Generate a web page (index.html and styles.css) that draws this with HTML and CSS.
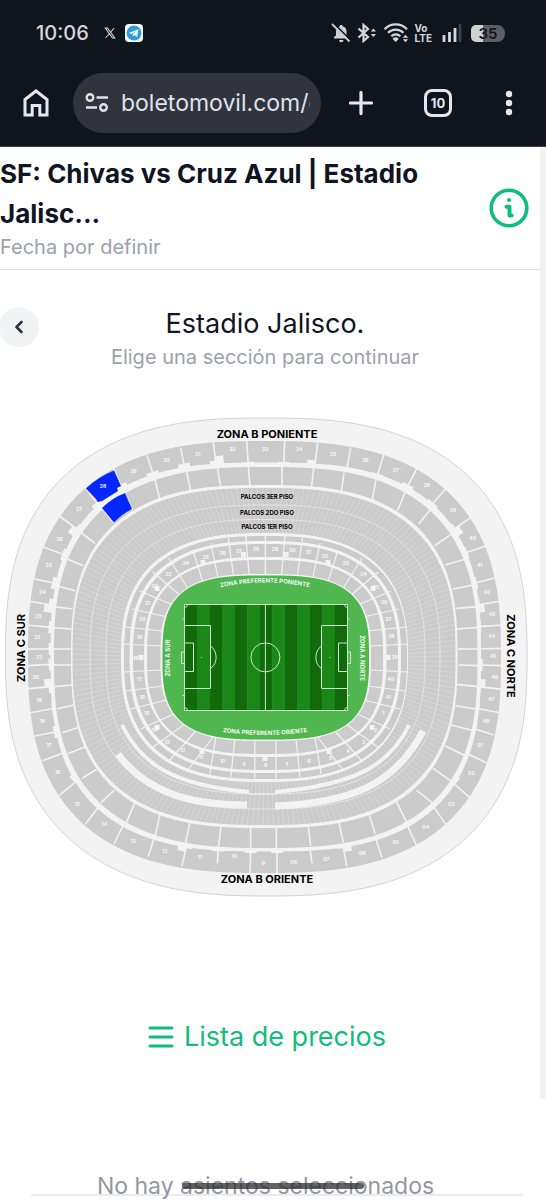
FILE: index.html
```html
<!DOCTYPE html>
<html lang="es">
<head>
<meta charset="utf-8">
<meta name="viewport" content="width=device-width, initial-scale=1">
<title>Boletomovil</title>
<link rel="stylesheet" href="styles.css">
</head>
<body>
<header class="browser">
  <div class="status">
    <div class="status-left">
      <span class="clock">10:06</span>
      <svg class="ic-x" viewBox="0 0 12 12" width="12" height="12"><path d="M1.3 1h2.2l7.2 10H8.500z M10.200 1 6.800 5 M5.200 7 1.500 11" fill="none" stroke="#d6d7da" stroke-width="1.100"/></svg>
      <svg viewBox="0 0 18 18" width="18" height="18"><rect width="18" height="18" rx="4" fill="#fff"/><circle cx="9" cy="9" r="7.500" fill="#2c9fdb"/><path d="M3.800 9 13.500 5.200 12 13 9.300 11.100 8 12.400 7.700 10.200 11.400 6.900 6.600 9.900z" fill="#fff"/></svg>
    </div>
    <div class="status-right">
      <svg viewBox="0 0 20 20" width="20" height="20"><path d="M3 15.500h14v-1.600l-1.500-1.500V8.500c0-2.700-1.500-4.700-4-5.200V2h-2.500v1.300C6.500 3.800 5 5.800 5 8.500v3.900l-2 1.500zM8 17h4.500a2.200 2.200 0 0 1-4.500 0z" fill="#cfd0d2"/><path d="M2.300 0 20 17.700" stroke="#0e151d" stroke-width="1.800"/><path d="M1 1 18.500 18.500" stroke="#cfd0d2" stroke-width="1.800"/></svg>
      <svg viewBox="0 0 20 20" width="20" height="20"><path d="M1.500 5.500 11 14 6.500 18V2L11 6 1.500 14.500" fill="none" stroke="#d6d7da" stroke-width="2.200"/><path d="m13.800 8.500 2.600-3 2.600 3zM13.800 11h5.200l-2.600 3z" fill="#d6d7da"/></svg>
      <svg viewBox="0 0 26 20" width="26" height="20"><g fill="none" stroke="#d6d7da" stroke-width="2.200"><path d="M1.500 6.200a15.500 15.500 0 0 1 22.500 0"/><path d="M5 9.800a11 11 0 0 1 15.500 0"/><path d="M8.300 13.200a6.500 6.500 0 0 1 9 0"/></g><path d="M9.500 15.800a4.700 4.700 0 0 1 6.400 0L12.700 19z" fill="#d6d7da"/><path d="m19.800 14.700 2.700-3 2.700 3zM19.800 16.300h5.400l-2.700 3z" fill="#d6d7da"/></svg>
      <span class="volte"><span>Vo</span><span>LTE</span></span>
      <svg class="signal" viewBox="0 0 20 18" width="20" height="18"><path d="M2 18v-7M7.500 18V8M13 18V4" stroke="#d6d7da" stroke-width="2.800"/><path d="M18 18V0" stroke="#3b4148" stroke-width="2.800"/></svg>
      <span class="battery">35</span>
    </div>
  </div>
  <div class="toolbar">
    <button class="tool" aria-label="Inicio"><svg viewBox="0 0 26 28" width="26" height="28"><path d="M2 10.500 13 2l11 8.500V26h-7.200v-9.500H9.200V26H2z" fill="none" stroke="#e3e7f5" stroke-width="3"/></svg></button>
    <div class="omnibox">
      <svg viewBox="0 0 24 20" width="24" height="20"><g fill="none" stroke="#dfe2ef" stroke-width="2.400"><circle cx="5" cy="4.500" r="3.300"/><path d="M11.500 4.500H23M1 14.500h11"/><circle cx="18.500" cy="14.500" r="3.300"/></g></svg>
      <input class="url" type="text" aria-label="Dirección" value="boletomovil.com/e">
    </div>
    <div class="tools">
      <button class="tool" aria-label="Nueva pestaña"><svg viewBox="0 0 24 24" width="24" height="24"><path d="M12 1.500v21M1.500 12h21" stroke="#e3e7f5" stroke-width="3.200" stroke-linecap="round"/></svg></button>
      <button class="tool tabs" aria-label="Pestañas">10</button>
      <button class="tool menu" aria-label="Menú"><svg viewBox="0 0 8 26" width="8" height="26"><g fill="#e3e7f5"><circle cx="4" cy="4" r="3.200"/><circle cx="4" cy="13" r="3.200"/><circle cx="4" cy="22" r="3.200"/></g></svg></button>
    </div>
  </div>
</header>
<div class="page">
  <section class="event">
    <div>
      <h1>SF: Chivas vs Cruz Azul | Estadio Jalisc...</h1>
      <p class="muted">Fecha por definir</p>
    </div>
    <button class="info" aria-label="Información"><svg viewBox="0 0 40 40" width="40" height="40"><circle cx="20" cy="20" r="17.800" fill="none" stroke="#10bd79" stroke-width="3.600"/><circle cx="20" cy="12" r="2.100" fill="#10bd79"/><path d="M17.500 18.800h3v8.700h2.200" fill="none" stroke="#10bd79" stroke-width="4" stroke-linecap="round" stroke-linejoin="round"/></svg></button>
  </section>
  <main class="chooser">
    <div class="heading">
      <button class="back" aria-label="Volver"><svg viewBox="0 0 12 16" width="12" height="16"><path d="M8.500 3 3.500 8l5 5" fill="none" stroke="#2b3442" stroke-width="2.600" stroke-linecap="round" stroke-linejoin="round"/></svg></button>
      <div class="names">
        <h2>Estadio Jalisco.</h2>
        <p class="muted">Elige una sección para continuar</p>
      </div>
    </div>
    <svg class="map" viewBox="0 410 540 490" role="img" aria-label="Mapa del Estadio Jalisco">
      <defs>
        <path id="arc-top" d="M210 590Q265 575 320 590"/>
        <path id="arc-bottom" d="M210 730Q265 740 320 730"/>
      </defs>
      <g id="stands"></g>
      <g id="pitch"></g>
      <g class="zone">
        <text x="267" y="438">ZONA B PONIENTE</text>
        <text x="267" y="883">ZONA B ORIENTE</text>
        <text transform="translate(25 648) rotate(-90)">ZONA C SUR</text>
        <text transform="translate(507 656) rotate(90)">ZONA C NORTE</text>
      </g>
      <g class="box">
        <text x="267" y="499">PALCOS 3ER PISO</text>
        <text x="267" y="515">PALCOS 2DO PISO</text>
        <text x="267" y="529">PALCOS 1ER PISO</text>
      </g>
      <g class="grass">
        <text><textPath href="#arc-top" startOffset="50%">ZONA PREFERENTE PONIENTE</textPath></text>
        <text><textPath href="#arc-bottom" startOffset="50%">ZONA PREFERENTE ORIENTE</textPath></text>
        <text transform="translate(170 658) rotate(-90)">ZONA A SUR</text>
        <text transform="translate(360 658) rotate(90)">ZONA A NORTE</text>
      </g>
    </svg>
    <button class="prices"><svg viewBox="0 0 26 22" width="26" height="22"><path d="M2 2h22M2 11h22M2 20h22" stroke="#10bd79" stroke-width="3" stroke-linecap="round"/></svg>Lista de precios</button>
  </main>
</div>
<footer class="cart">
  <p>No hay asientos seleccionados</p>
  <span class="gesture"></span>
</footer>
<script src="map.js"></script>
</body>
</html>
```
FILE: styles.css
```css
* { box-sizing: border-box; }
body, h1, h2, p { margin: 0; }
body {
  min-height: 100vh;
  display: flex;
  flex-direction: column;
  background: #fff;
  color: #0f1524;
  font-family: Inter, "Liberation Sans", sans-serif;
  overflow-x: hidden;
}
button { border: 0; padding: 0; background: none; font: inherit; color: inherit; }
svg { display: block; flex: none; }

.browser { background: #0e151d; border-bottom: 1px solid #3c4148; padding-bottom: 13px; }
.status { display: flex; justify-content: space-between; align-items: center; height: 66px; padding: 0 41px 0 36px; }
.status-left, .status-right { display: flex; align-items: center; }
.clock { font-size: 20px; font-weight: 500; color: #d6d7da; width: 68px; }
.ic-x { margin-right: 9px; }
.status-right { gap: 6px; }
.volte { display: flex; flex-direction: column; margin-right: 1px; font-size: 10px; line-height: 10px; font-weight: 700; color: #d6d7da; }
.signal { margin: 0 3px; }
.battery {
  width: 34px; height: 17px; border-radius: 5px 8px 8px 5px;
  background: linear-gradient(90deg, #d0d1d3 12px, #5c6066 12px);
  color: #10161d; font-size: 15px; line-height: 17px; font-weight: 600; text-align: center;
}
.toolbar { display: flex; align-items: center; padding: 7px 31px 0 23px; }
.tool { display: flex; align-items: center; justify-content: center; }
.tools { flex: 1; display: flex; align-items: center; justify-content: space-between; padding-left: 28px; }
.omnibox {
  display: flex; align-items: center; gap: 12px;
  flex: 0 1 248px; min-width: 0; height: 60px; margin-left: 24px;
  padding: 0 11px 0 12px; border-radius: 30px; background: #31343d;
}
.url { flex: 1; min-width: 0; border: 0; padding: 0; background: none; color: #dfe2ef; font: 23px Inter, sans-serif; outline: 0; }
.tabs { width: 28px; height: 28px; border: 3px solid #e3e7f5; border-radius: 8px; color: #e3e7f5; font-size: 13px; font-weight: 700; }
.menu { width: 12px; }

.page { border-right: 6px solid #f1f1f2; flex: none; padding-bottom: 42px; }
.event {
  display: flex; align-items: center; justify-content: space-between;
  padding: 7px 11px 8px 0; border-bottom: 1px solid #dcdee6;
}
h1 { font-size: 26px; line-height: 40px; font-weight: 700; }
.muted { font-size: 20px; line-height: 27px; color: #9ba1ab; }
.info { margin-left: 16px; }
.heading { display: flex; align-items: flex-start; padding: 34px 49px 0 0; }
.back { display: flex; align-items: center; justify-content: center; width: 40px; height: 40px; margin: 3px 0 0 -1px; border-radius: 50%; background: #f2f3f5; }
.names { flex: 1; text-align: center; }
h2 { font-size: 27px; line-height: 40px; font-weight: 400; }
.map { width: 100%; height: auto; margin-top: 39px; }
.prices { display: flex; align-items: center; gap: 10px; margin: 117px auto 0; padding-right: 6px; font-size: 27px; line-height: 40px; color: #10bd79; }

.cart {
  position: relative; height: 96px; margin: auto 23px 4px 31px; padding-top: 72px;
  background: linear-gradient(#ebecef, #ebecef) bottom / 100% 2px no-repeat;
  text-align: center;
}
.cart p { padding-right: 23px; font-size: 23px; line-height: 28px; color: #9397a2; }
.gesture { position: absolute; bottom: 7px; left: 50%; width: 182px; height: 6px; margin-left: -95px; border-radius: 3px; background: rgba(45, 45, 45, 0.75); }

.map text { text-anchor: middle; font-family: Inter, sans-serif; font-weight: 700; }
.zone text { font-size: 11px; }
.box text { font-size: 6px; }
.grass text { font-size: 6px; fill: #eef8ee; }
.map .seat-no { font-size: 5px; fill: #f8f8f8; }
```
FILE: map.js
```js
var NS = "http://www.w3.org/2000/svg";
var stands = document.getElementById("stands");
var pitch = document.getElementById("pitch");
var SEAT = "#cbcbcb", GAP = "#f3f3f3";

function add(parent, tag, attrs, text) {
  var el = document.createElementNS(NS, tag);
  for (var k in attrs) el.setAttribute(k, attrs[k]);
  if (text) el.textContent = text;
  parent.appendChild(el);
  return el;
}

// A ring edge: left, top, right, bottom, then the roundness exponent,
// either one for all corners or a list (top-left, top-right, bottom-right, bottom-left).
function point(e, t) {
  var cx = (e[0] + e[2]) / 2, cy = (e[1] + e[3]) / 2;
  var c = Math.cos(t), s = Math.sin(t), n = e[4];
  if (n.length) n = s < 0 ? (c < 0 ? n[0] : n[1]) : (c < 0 ? n[3] : n[2]);
  return [
    cx + (e[2] - e[0]) / 2 * Math.sign(c) * Math.pow(Math.abs(c), 2 / n),
    cy + (e[3] - e[1]) / 2 * Math.sign(s) * Math.pow(Math.abs(s), 2 / n)
  ];
}
function trace(e) {
  var d = "";
  for (var i = 0; i < 720; i++) {
    var q = point(e, i * Math.PI / 360);
    d += (i ? "L" : "M") + q[0].toFixed(1) + " " + q[1].toFixed(1);
  }
  return d + "Z";
}
function shape(e, fill, stroke, w) {
  add(stands, "path", { d: trace(e), fill: fill, stroke: stroke || "none", "stroke-width": w || 0 });
}
function line(a, w, color) {
  add(stands, "path", { d: "M" + a[0] + " " + a[1] + "L" + a[2] + " " + a[3], stroke: color || GAP, "stroke-width": w, fill: "none" });
}
// Converts points measured on a 3x quadrant grid to map units.
function quad(ox, oy, list) {
  return list.map(function (a) {
    return a.map(function (v, i) { return (i % 2 ? oy : ox) + v / 3; });
  });
}

shape([5.5, 418, 527, 896, [2.6, 2.6, 2.55, 2.5]], GAP, "#d2d2d2", 1);
shape([28, 441, 501, 873, 2.65], SEAT);
shape([50.5, 462.5, 481, 851.5, 2.8], GAP);

var outer = [].concat(
  quad(0, 410, [[740,90,745,165],[640,98,648,160],[542,113,553,170],[441,136,460,195],[340,175,365,232],[254,230,295,285],[178,318,235,360],[132,412,195,435],[100,506,165,520],[87,574,155,585],[80,645,155,652],[80,717,155,717]]),
  quad(273, 410, [[35,90,32,165],[134,98,125,172],[233,113,220,185],[332,135,312,200],[433,173,402,232],[521,234,475,285],[594,322,540,360],[638,408,575,430],[665,504,603,520],[680,574,612,585],[688,645,615,650],[688,715,615,717]]),
  quad(0, 650, [[80,47,155,43],[84,116,155,110],[90,188,165,175],[100,259,170,245],[127,332,200,305],[178,436,240,385],[256,523,300,465],[342,582,375,515],[445,620,465,555],[546,648,560,585],[652,640,655,595],[750,673,752,600]]),
  quad(273, 650, [[12,673,12,600],[117,640,110,590],[221,648,210,585],[327,623,305,555],[430,585,400,520],[521,527,475,460],[590,442,530,390],[640,338,570,305],[663,255,600,235],[680,188,610,175],[688,118,615,110],[688,47,620,45]])
);
// Side on which a wide doorway opens, by divider.
var doors = { 1: -1, 6: 1, 9: 1, 13: 1, 18: -1, 21: -1, 25: -1, 29: -1, 33: -1, 38: 1, 42: 1, 46: 1 };
outer.forEach(function (a, i) {
  line(a, 1.6);
  var ang = Math.atan2(a[3] - a[1], a[2] - a[0]) * 180 / Math.PI;
  add(stands, "path", {
    d: "M-3 -6H2V6H-3Z",
    fill: GAP, transform: "translate(" + a[2] + " " + a[3] + ") rotate(" + ang + ")"
  });
  if (doors[i]) add(stands, "path", {
    d: "M-7 0V" + 8 * doors[i] + "H2V0Z",
    fill: GAP, transform: "translate(" + a[2] + " " + a[3] + ") rotate(" + ang + ")"
  });
});

shape([54, 467, 477.500, 848, 2.7], SEAT);
shape([71, 485, 457.500, 828, 2.7], GAP);
[].concat(
  quad(0, 410, [[745,168,750,230],[652,173,663,234],[560,186,573,247],[465,208,480,270],[374,248,397,300],[302,290,342,340],[241,366,285,400],[200,446,250,467],[170,527,225,542],[160,590,217,597],[158,653,213,657],[158,717,213,717]]),
  quad(273, 410, [[27,168,27,228],[122,175,115,237],[213,188,205,247],[309,208,298,270],[398,243,373,302],[474,296,437,342],[539,370,485,407],[579,447,517,465],[605,524,540,537],[612,590,550,595],[617,652,552,657],[617,717,555,717]]),
  quad(0, 650, [[158,45,213,45],[163,110,215,105],[172,176,222,165],[187,248,237,232],[203,311,257,290],[246,385,290,358],[303,458,343,420],[379,518,405,458],[466,556,480,493],[557,578,570,515],[655,593,663,530],[752,600,752,530]]),
  quad(273, 650, [[10,600,10,530],[113,588,105,525],[211,578,197,513],[306,551,288,490],[402,518,370,455],[477,458,430,420],[532,392,480,355],[574,316,517,288],[598,241,533,225],[612,178,548,167],[617,110,550,103],[617,47,557,45]])
).forEach(function (a) { line(a, 1.6); });

// Boxes: narrow cells in three tiers.
var boxOut = [72.5, 488, 455.5, 825, 2.65], boxIn = [121, 533, 408, 782, 2.6];
shape(boxOut, SEAT);
var last = null, run = 0;
for (var i = 0; i < 14400; i++) {
  var t = i * Math.PI / 7200, p = point(boxOut, t);
  if (last) run += Math.hypot(p[0] - last[0], p[1] - last[1]);
  last = p;
  if (run >= 5.2) {
    run = 0;
    line(p.concat(point(boxIn, t)), 0.6, "#dedede");
  }
}
shape([90, 505, 440, 809, 2.6], "none", "#e6e6e6", 1);
shape([106, 519.5, 425, 794, 2.6], "none", "#e6e6e6", 1);
[["M122 725C140 762 170 785 249 792", 4], ["M409 725C390 765 355 785 275 792", 4],
 ["M118 754C145 790 185 805 247 805", 7], ["M423 731C395 785 350 803 275 806", 7]].forEach(function (b) {
  add(stands, "path", { d: b[0], stroke: GAP, "stroke-width": b[1], fill: "none" });
});
line([249, 794, 275, 794], 1);

shape(boxIn, GAP);
shape([124, 536, 407, 779, 2.6], SEAT);
shape([129.5, 541, 401, 773, 2.6], GAP);
shape([133, 544, 398, 770, 2.6], SEAT);
shape([144, 557, 386.5, 757, 2.7], GAP);
shape([147, 560, 383, 754, 2.8], SEAT);
shape([160.5, 574, 371, 741, 3], GAP);

var C = 265.4;
[[265.4,534,265.4,574],[285,535,281.7,574],[302.500,538,297.3,576],[320,543,312.7,578],[338,550,327.7,583],[362,558,342.7,589],[378,572,350,596],[391,591,358,605],[399,609,363,617],[406,627,368,631],[408,644,370,646],
 [408,672,370,670],[405,691,368,686],[400,709,364,700],[390,729,355,713],[379,748,346,724],[362,761,334,730],[343,770,316,735],[321,774,315,737],[300,777,296,739],[276,780,276,740]].forEach(function (a) {
  line(a, 1.2);
  line([2 * C - a[0], a[1], 2 * C - a[2], a[3]], 1.2);
});
// Stairways between the inner tiers.
[[203,562],[243.500,554],[286,554],[328,562],[157,588],[373,588],[141,657],[388,657],[157,727],[372,727],[202,751],[265,758],[329,751]].forEach(function (s) {
  add(stands, "rect", { x: s[0] - 2.5, y: s[1] - 2, width: 5, height: 5, fill: GAP });
});

add(stands, "path", { d: "M86 488.500Q98 477 114 470.500L121 486 117 488 118 491 102 501 98 502 96 499Z", fill: "#0427ff" });
add(stands, "path", { d: "M102 508Q112 498 125 493L132 509Q122 514 114 522.500Z", fill: "#0427ff" });

function numbers(ox, oy, list) {
  list.forEach(function (n) {
    add(stands, "text", { x: ox + n[1] / 3, y: oy + n[2] / 3 + 2, "class": "seat-no" }, String(n[0]));
  });
}
numbers(0, 410, [[33,795,118],[32,697,118],[31,593,132],[30,499,150],[29,400,182],[28,309,228],[27,237,296],[26,178,387],[25,146,466],[24,127,545],[23,115,617],[22,112,680],[21,117,740],[19,419,680],[18,407,745]]);
numbers(273, 410, [[34,78,118],[35,180,132],[36,277,150],[37,368,180],[38,461,224],[39,539,299],[40,599,384],[41,620,464],[42,642,545],[43,657,613],[44,657,678],[45,660,739],[37,346,628],[38,355,679],[39,365,740]]);
numbers(0, 650, [[20,107,80],[19,117,150],[18,127,214],[17,147,286],[16,173,365],[15,232,461],[14,313,523],[13,399,573],[12,495,603],[11,600,620],[10,703,617],[9,790,639],[17,418,86],[16,427,140],[15,440,188],[14,463,240],[13,502,275],[12,548,301],[11,603,322],[10,668,334],[9,732,341],[8,797,345]]);
numbers(273, 650, [[46,665,80],[47,655,147],[48,639,214],["01",621,286],["02",595,369],["03",535,462],["04",459,531],["05",368,577],["06",268,608],["07",160,626],["08",62,635],[7,42,342],[6,108,334],[5,172,324],[4,225,302],[3,272,275],[2,308,240],[1,331,190],[41,346,140],[40,354,87]]);
numbers(140, 530, [[28,348,58],[27,297,62],[26,247,68],[25,197,80],[24,138,99],[23,85,131],[22,45,168],[21,22,218],[20,7,267],[29,405,57],[30,457,61],[31,505,67],[32,555,78],[33,617,99],[34,670,131],[35,707,172],[36,732,215]]);

// Grass and playing field.
add(pitch, "path", { d: trace([162.500, 575.500, 369, 739.500, 3.1]), fill: "#50b650" });
for (var k = 0; k < 13; k++) {
  add(pitch, "rect", { x: 184.5 + k * 12.54, y: 604.5, width: 12.6, height: 106, fill: k % 2 ? "#1a8717" : "#116b0c" });
}
var lines = add(pitch, "g", { fill: "none", stroke: "#c9e8c7", "stroke-width": 1 });
add(lines, "path", { d: "M184.500 604.500H347.500V710.500H184.500ZM265.400 604.500V710.500M184.500 625.500H210.500V688.500H184.500M184.500 643H193.500V671.500H184.500M184.500 652H181.500V663.500H184.500M347.500 625.500H321.500V688.500H347.500M347.500 643H338.500V671.500H347.500M347.500 652H350.500V663.500H347.500M210.500 646C218 651 218 664 210.500 668.500M321.500 646C314 651 314 664 321.500 668.500M187.500 604.500A3 3 0 0 1 184.500 607.500M344.500 604.500A3 3 0 0 0 347.500 607.500M187.500 710.500A3 3 0 0 0 184.500 707.500M344.500 710.500A3 3 0 0 1 347.500 707.500M182.500 619H184.500M182.500 695.500H184.500M347.500 619H349.500M347.500 695.500H349.500" });
add(lines, "circle", { cx: 265.4, cy: 657.4, r: 14.5 });
add(lines, "circle", { cx: 201.5, cy: 657.4, r: 0.2 });
add(lines, "circle", { cx: 330, cy: 657.4, r: 0.2 });
```
